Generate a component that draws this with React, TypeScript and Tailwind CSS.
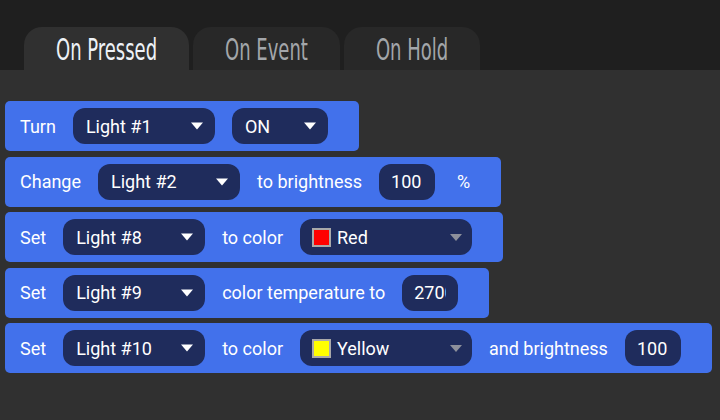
import { ReactNode } from "react";

const tabs = [
  { label: "On Pressed", active: true },
  { label: "On Event", active: false },
  { label: "On Hold", active: false },
];

const Arrow = ({ muted }: { muted?: boolean }) =>
  muted ? (
    <svg width="12" height="7" viewBox="0 0 12 7" className="shrink-0">
      <path d="M0 0 L12 0 L6 7 Z" fill="#8d909b" />
    </svg>
  ) : (
    <svg width="12" height="8" viewBox="0 0 12 8" className="shrink-0">
      <path d="M0 0.5 L12 0.5 L6 7.5 Z" fill="#ffffff" />
    </svg>
  );

const Select = ({ value, width }: { value: string; width: string }) => (
  <div
    className={`flex h-9 items-center justify-between rounded-xl bg-[#1f2c5c] pl-[13px] pr-3 ${width}`}
  >
    <span>{value}</span>
    <Arrow />
  </div>
);

const ColorSelect = ({ value, color }: { value: string; color: string }) => (
  <div className="flex h-9 w-[172px] items-center rounded-xl bg-[#1f2c5c] pl-3 pr-[10px]">
    <span
      className="h-[19px] w-[19px] shrink-0 border-2 border-[#a9a9a9]"
      style={{ backgroundColor: color }}
    />
    <span className="ml-[6px] flex-1">{value}</span>
    <Arrow muted />
  </div>
);

const NumberInput = ({ value }: { value: string }) => (
  <input
    type="text"
    readOnly
    value={value}
    className="h-9 w-14 rounded-xl bg-[#1f2c5c] px-3 text-white outline-none"
  />
);

const Row = ({ children }: { children: ReactNode }) => (
  <div className="inline-flex h-[50px] items-center gap-[17px] rounded-[5px] bg-[#4271eb] pl-[15px] pr-[31px] text-white">
    {children}
  </div>
);

export default function App() {
  return (
    <div className="flex h-[420px] w-[720px] flex-col bg-[#303030] font-['Roboto',sans-serif] text-[18px]">
      <div className="flex h-[70px] items-end gap-1 bg-[#1f1f1f] pl-6">
        {tabs.map((t) => (
          <div
            key={t.label}
            className={`flex h-[43px] items-center justify-center rounded-t-[18px] px-8 ${
              t.active ? "bg-[#303030] text-[#eef2f7]" : "bg-[#282828] text-[#a3a6aa]"
            }`}
          >
            <span className="inline-block scale-y-[1.5] font-['Liberation_Sans_Narrow','DejaVu_Sans_Condensed',sans-serif] text-[20px]">
              {t.label}
            </span>
          </div>
        ))}
      </div>

      <div className="flex flex-col items-start gap-[5.5px] pl-[5px] pt-[31px]">
        <Row>
          <span>Turn</span>
          <Select value="Light #1" width="w-[142px]" />
          <Select value="ON" width="w-24" />
        </Row>
        <Row>
          <span>Change</span>
          <Select value="Light #2" width="w-[142px]" />
          <span>to brightness</span>
          <NumberInput value="100" />
          <span className="ml-[5px]">%</span>
        </Row>
        <Row>
          <span>Set</span>
          <Select value="Light #8" width="w-[142px]" />
          <span>to color</span>
          <ColorSelect value="Red" color="#ff0000" />
        </Row>
        <Row>
          <span>Set</span>
          <Select value="Light #9" width="w-[142px]" />
          <span>color temperature to</span>
          <NumberInput value="2700" />
        </Row>
        <Row>
          <span>Set</span>
          <Select value="Light #10" width="w-[142px]" />
          <span>to color</span>
          <ColorSelect value="Yellow" color="#ffff00" />
          <span>and brightness</span>
          <NumberInput value="100" />
        </Row>
      </div>
    </div>
  );
}
